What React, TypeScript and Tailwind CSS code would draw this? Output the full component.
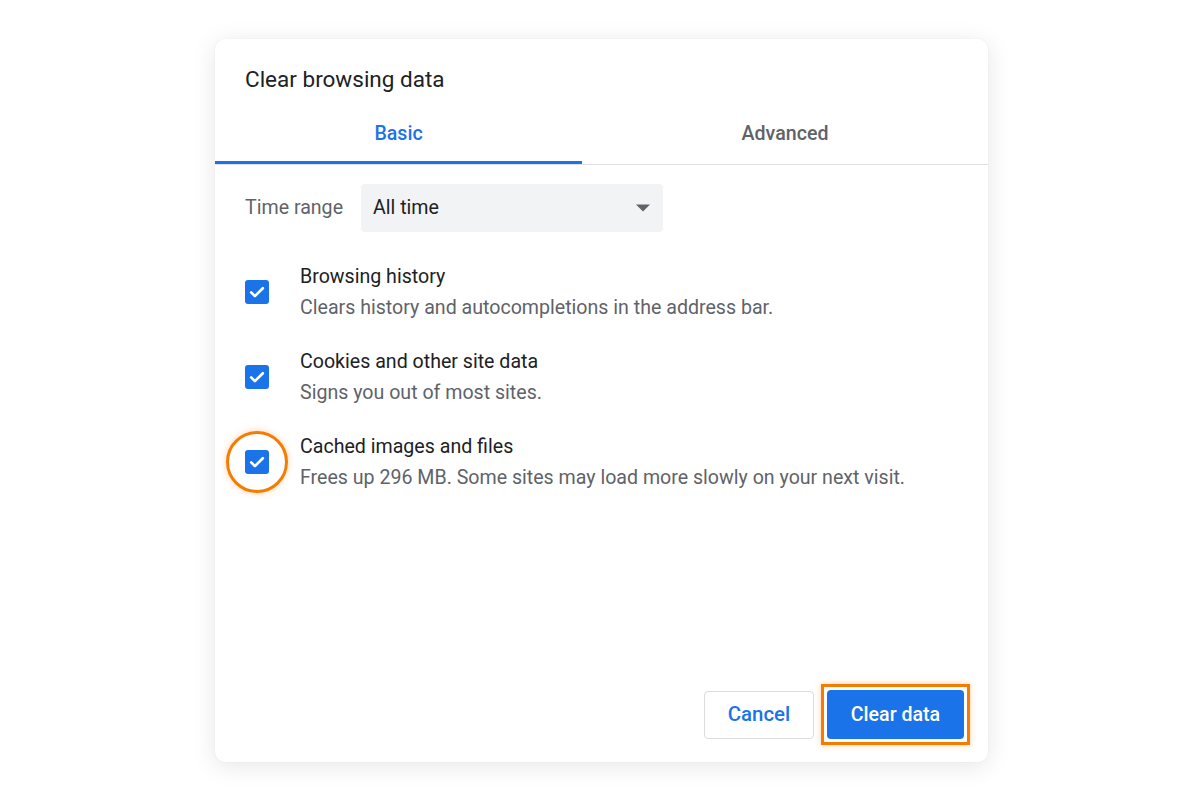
const ITEMS = [
  { title: 'Browsing history', desc: 'Clears history and autocompletions in the address bar.' },
  { title: 'Cookies and other site data', desc: 'Signs you out of most sites.' },
  { title: 'Cached images and files', desc: 'Frees up 296 MB. Some sites may load more slowly on your next visit.', ring: true },
]

function Check() {
  return (
    <span className="w-6 h-6 rounded-[3px] bg-[#1a73e8] flex items-center justify-center shrink-0">
      <svg width="20" height="20" viewBox="0 0 24 24" fill="none">
        <path d="M5 12.5l4.5 4.5L19 7.5" stroke="white" strokeWidth="3.2" strokeLinecap="round" strokeLinejoin="round" />
      </svg>
    </span>
  )
}

export default function App() {
  return (
    <div className="w-[1200px] h-[800px] bg-white flex pl-[215px] pt-[39px]" style={{ fontFamily: 'Roboto, "Liberation Sans", sans-serif' }}>
      <div className="w-[773px] h-[723px] bg-white rounded-[10px] shadow-[0_4px_24px_rgba(0,0,0,0.10),0_0_2px_rgba(0,0,0,0.06)] flex flex-col">
        {/* Header */}
        <h1 className="text-[22.5px] text-[#202124] px-[30px] pt-[25px] leading-[30px]">Clear browsing data</h1>

        {/* Tabs */}
        <div className="flex mt-[10px] border-b border-[#e0e0e0]">
          <div className="flex-1 max-w-[367px] h-[60px] flex items-center justify-center text-[19.6px] font-medium text-[#1a73e8] border-b-[3px] border-[#1a73e8] -mb-px pt-[2px]">
            Basic
          </div>
          <div className="flex-1 h-[60px] flex items-center justify-center text-[19.6px] font-medium text-[#5f6368] pb-[1px]">
            Advanced
          </div>
        </div>

        {/* Time range */}
        <div className="flex items-center px-[30px] mt-[19px]">
          <span className="text-[19.6px] text-[#5f6368] w-[116px]">Time range</span>
          <div className="w-[302px] h-[48px] bg-[#f1f3f4] rounded-[4px] flex items-center justify-between pl-[12px] pr-[12px]">
            <span className="text-[19.6px] text-[#202124]">All time</span>
            <svg width="16" height="10" viewBox="0 0 16 10">
              <path d="M1 1.5h14L8 8.5z" fill="#5f6368" />
            </svg>
          </div>
        </div>

        {/* Options */}
        <div className="flex flex-col gap-[23px] mt-[29px] px-[30px]">
          {ITEMS.map((it) => (
            <div key={it.title} className="flex items-center">
              <div className="relative w-6 h-6 mr-[31px]">
                <Check />
                {it.ring && (
                  <span className="absolute -left-[19px] -top-[19px] w-[62px] h-[62px] rounded-full border-[3px] border-[#f57c00] shadow-[0_0_6px_rgba(245,124,0,0.35)]" />
                )}
              </div>
              <div className="flex flex-col">
                <span className="text-[19.6px] leading-[31px] text-[#202124]">{it.title}</span>
                <span className="text-[19.6px] leading-[31px] text-[#5f6368]">{it.desc}</span>
              </div>
            </div>
          ))}
        </div>

        {/* Footer */}
        <div className="mt-auto flex justify-end items-center gap-[7px] pr-[18px] pb-[17px]">
          <button type="button" className="w-[110px] h-[48px] rounded-[4px] border border-[#dadce0] bg-white text-[20.4px] font-medium text-[#1a73e8]">
            Cancel
          </button>
          <div className="border-[3px] border-[#f57c00] p-[3px] shadow-[0_0_6px_rgba(245,124,0,0.35)]">
            <button type="button" className="w-[137px] h-[49px] rounded-[4px] bg-[#1a73e8] text-[19.6px] font-medium text-white flex items-center justify-center">
              Clear data
            </button>
          </div>
        </div>
      </div>
    </div>
  )
}
